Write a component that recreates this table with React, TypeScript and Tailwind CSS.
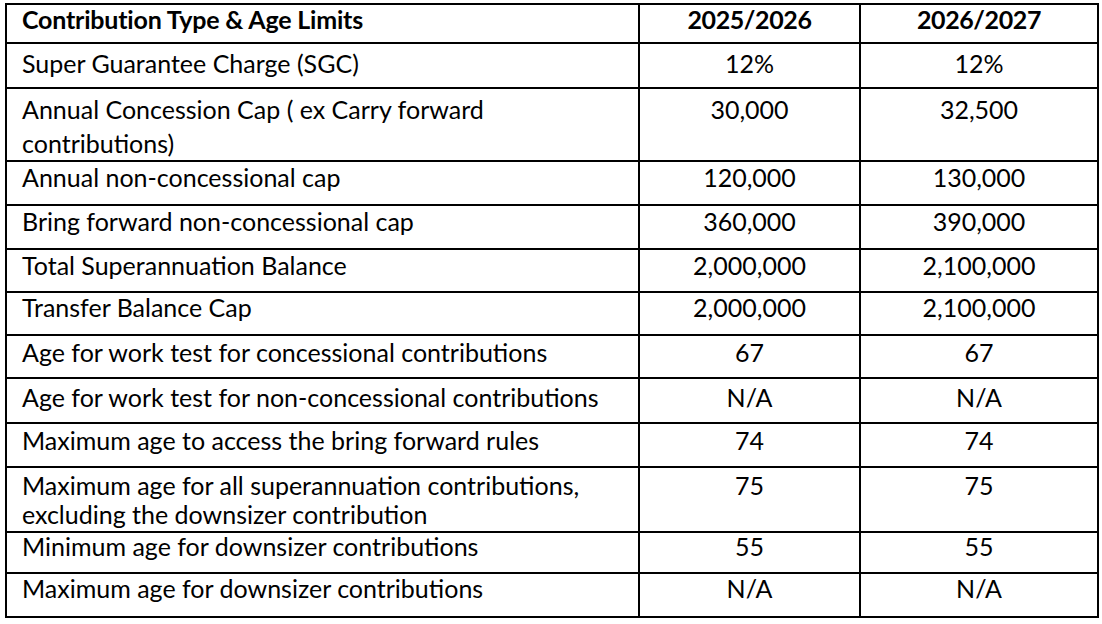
import React from 'react';

interface Row {
  label: string[];
  a: string;
  b: string;
  // row height, top padding and line height, matched to the source document
  cls: string;
}

const rows: Row[] = [
  { label: ['Super Guarantee Charge (SGC)'], a: '12%', b: '12%', cls: 'h-[45px] [&>td]:pt-[7px] leading-[24px]' },
  { label: ['Annual Concession Cap ( ex Carry forward', 'contributions)'], a: '30,000', b: '32,500', cls: 'h-[72px] [&>td]:pt-[3px] leading-[34px]' },
  { label: ['Annual non-concessional cap'], a: '120,000', b: '130,000', cls: 'h-[44px] [&>td]:pt-[3px] leading-[24px]' },
  { label: ['Bring forward non-concessional cap'], a: '360,000', b: '390,000', cls: 'h-[44px] [&>td]:pt-[3px] leading-[24px]' },
  { label: ['Total Superannuation Balance'], a: '2,000,000', b: '2,100,000', cls: 'h-[43px] [&>td]:pt-[3px] leading-[24px]' },
  { label: ['Transfer Balance Cap'], a: '2,000,000', b: '2,100,000', cls: 'h-[43px] [&>td]:pt-[2px] leading-[24px]' },
  { label: ['Age for work test for concessional contributions'], a: '67', b: '67', cls: 'h-[43px] [&>td]:pt-[4px] leading-[24px]' },
  { label: ['Age for work test for non-concessional contributions'], a: 'N/A', b: 'N/A', cls: 'h-[45px] [&>td]:pt-[6px] leading-[24px]' },
  { label: ['Maximum age to access the bring forward rules'], a: '74', b: '74', cls: 'h-[44px] [&>td]:pt-[4px] leading-[24px]' },
  { label: ['Maximum age for all superannuation contributions,', 'excluding the downsizer contribution'], a: '75', b: '75', cls: 'h-[65px] [&>td]:pt-[3px] leading-[29px]' },
  { label: ['Minimum age for downsizer contributions'], a: '55', b: '55', cls: 'h-[41px] [&>td]:pt-[1px] leading-[24px]' },
  { label: ['Maximum age for downsizer contributions'], a: 'N/A', b: 'N/A', cls: 'h-[44px] [&>td]:pt-[2px] leading-[24px]' },
];

export default function App() {
  return (
    <div className="w-[1102px] h-[624px] bg-white pl-[5px] pt-[3px] font-['Lato',sans-serif] text-black text-[25px] leading-[30px]">
      <table className="table-fixed border-collapse w-[1092px]">
        <colgroup>
          <col className="w-[633px]" />
          <col className="w-[221px]" />
          <col className="w-[238px]" />
        </colgroup>
        <thead>
          <tr className="h-[39px] leading-[26px]">
            <th className="border-2 border-black align-top text-left font-bold pl-[15px] pt-[1px] tracking-[-0.2px]">
              Contribution Type &amp; Age Limits
            </th>
            <th className="border-2 border-black align-top text-center font-bold pt-[1px] tracking-[-0.4px]">2025/2026</th>
            <th className="border-2 border-black align-top text-center font-bold pt-[1px] tracking-[-0.4px]">2026/2027</th>
          </tr>
        </thead>
        <tbody>
          {rows.map((r) => (
            <tr key={r.label[0]} className={r.cls}>
              <td className="border-2 border-black align-top pl-[15px] pb-0">
                {r.label.map((l) => (
                  <div key={l}>{l}</div>
                ))}
              </td>
              <td className="border-2 border-black align-top text-center pb-0">{r.a}</td>
              <td className="border-2 border-black align-top text-center pb-0">{r.b}</td>
            </tr>
          ))}
        </tbody>
      </table>
    </div>
  );
}
